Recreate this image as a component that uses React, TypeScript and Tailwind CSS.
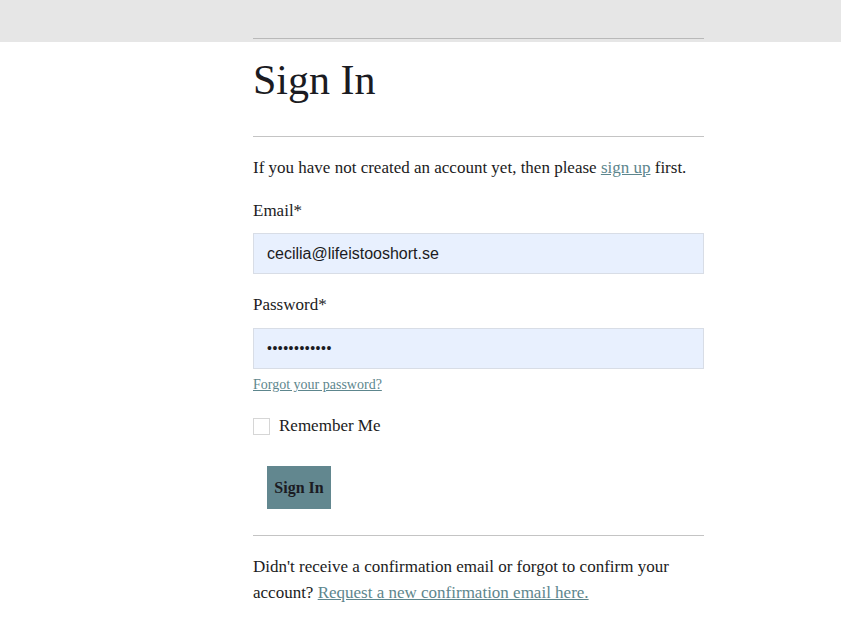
import React from 'react';

const serif = { fontFamily: '"Liberation Serif", "DejaVu Serif", serif' };

export default function App() {
  return (
    <div className="relative min-h-[633px] w-full bg-white text-[#1b1b22]" style={serif}>
      <div className="h-[42px] w-full bg-[#e6e6e6]" />
      <div className="absolute left-0 top-[38px] w-full">
        <div className="ml-[253px] w-[451px]">
          <div className="border-t border-[#b9b9b9]" />
          <h1 className="mt-[15px] text-[42px] leading-[52px]">Sign In</h1>
          <div className="mt-[30px] border-t border-[#c4c4c4]" />
          <p className="mt-[19px] text-[17px] leading-[24px]">
            If you have not created an account yet, then please{' '}
            <a href="#" className="text-[#5d868d] underline">sign up</a> first.
          </p>
          <label className="mt-[19px] block text-[17px] leading-[24px]">Email*</label>
          <div
            className="mt-[10px] flex h-[41px] items-center border border-[#d8dde6] bg-[#e8f0fe] pl-[13px] text-[16px]"
            style={{ fontFamily: '"Liberation Sans", Arial, sans-serif' }}
          >
            cecilia@lifeistooshort.se
          </div>
          <label className="mt-[19px] block text-[17px] leading-[24px]">Password*</label>
          <div
            className="mt-[11px] flex h-[41px] items-center border border-[#d8dde6] bg-[#e8f0fe] pl-[13px] text-[14px] tracking-[0.5px]"
            style={{ fontFamily: '"Liberation Sans", Arial, sans-serif' }}
          >
            ••••••••••••
          </div>
          <a href="#" className="mt-[6px] block text-[14px] leading-[20px] text-[#5d868d] underline">
            Forgot your password?
          </a>
          <div className="mt-[19px] flex items-center">
            <span className="h-[17px] w-[17px] border border-[#d6d6d6] bg-white" />
            <span className="ml-[9px] text-[17px] leading-[24px]">Remember Me</span>
          </div>
          <button className="ml-[14px] mt-[28px] flex h-[43px] w-[64px] items-center justify-center bg-[#62878f] text-[16px] font-bold text-[#1b1b22]">
            Sign In
          </button>
          <div className="mt-[26px] border-t border-[#c4c4c4]" />
          <p className="mt-[18px] text-[17px] leading-[26px]">
            Didn't receive a confirmation email or forgot to confirm your account?{' '}
            <a href="#" className="text-[#5d868d] underline">Request a new confirmation email here.</a>
          </p>
        </div>
      </div>
    </div>
  );
}
